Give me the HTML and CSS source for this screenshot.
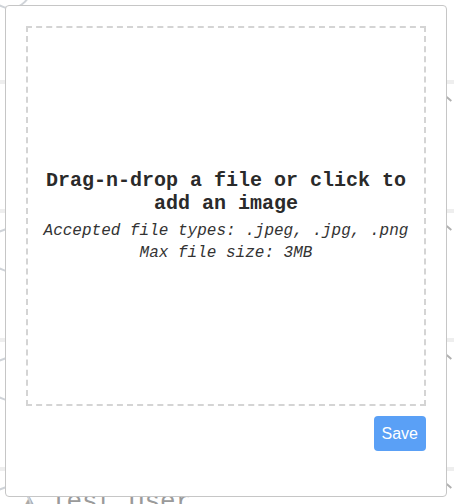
FILE: index.html
```html
<!DOCTYPE html>
<html>
<head>
<meta charset="utf-8">
<link rel="stylesheet" href="styles.css">
</head>
<body>
<div class="bg">
  <div class="row"><span class="avatar"></span><span class="chev"></span></div>
  <div class="row"><span class="avatar"></span><span class="chev"></span></div>
  <div class="row"><span class="avatar"></span><span class="chev"></span></div>
  <div class="row"><span class="avatar"></span><span class="chev"></span></div>
  <div class="user"><span class="uicon">&#9650;</span><span class="uname">Test User</span></div>
</div>
<div class="modal">
  <div class="drop">
    <div class="title">Drag-n-drop a file or click to add an image</div>
    <div class="sub">Accepted file types: .jpeg, .jpg, .png<br>Max file size: 3MB</div>
  </div>
  <div class="actions"><button class="save">Save</button></div>
</div>
</body>
</html>
```
FILE: styles.css
```css
html, body { margin: 0; padding: 0; }
body { width: 454px; height: 504px; overflow: hidden; background: #fff; font-family: "Liberation Sans", Arial, sans-serif; }
.bg { position: relative; margin-top: -45px; }
.row { position: relative; height: 125px; border-bottom: 4px solid #eeeeee; }
.avatar { position: absolute; left: -12px; top: 144px; width: 40px; height: 40px; border: 2px solid #cfd3d8; border-radius: 50%; }
.row:first-child .avatar { top: 10px; }
.chev { position: absolute; right: 2px; top: 143px; width: 6px; height: 2px; background: #b0b0b0; transform: rotate(40deg); }
.user { display: flex; align-items: center; gap: 16px; padding: 16px 0 0 24px; font-family: "Liberation Mono", monospace; font-size: 26px; line-height: 30px; color: #9a9a9a; }
.uicon { font-size: 18px; color: #aaa; }
.modal { position: fixed; left: 5px; top: 5px; width: 400px; height: 450px; padding: 20px; background: #fff; border: 1px solid #c6c6c6; border-radius: 4px; display: flex; flex-direction: column; }
.drop { height: 376px; border: 2px dashed #d4d4d4; display: flex; flex-direction: column; justify-content: center; align-items: center; text-align: center; color: #333; font-family: "Liberation Mono", "Courier New", monospace; padding: 0 4px; }
.title { font-size: 20px; font-weight: bold; line-height: 23px; color: #2a2a2a; }
.sub { margin-top: 5px; font-size: 16px; font-style: italic; line-height: 22px; color: #333; }
.actions { display: flex; justify-content: flex-end; margin-top: 10px; }
.save { background: #5aa0f6; color: #fff; border: none; border-radius: 4px; height: 35px; padding: 0 8px; font-family: "Liberation Sans", Arial, sans-serif; font-size: 16px; }
```
